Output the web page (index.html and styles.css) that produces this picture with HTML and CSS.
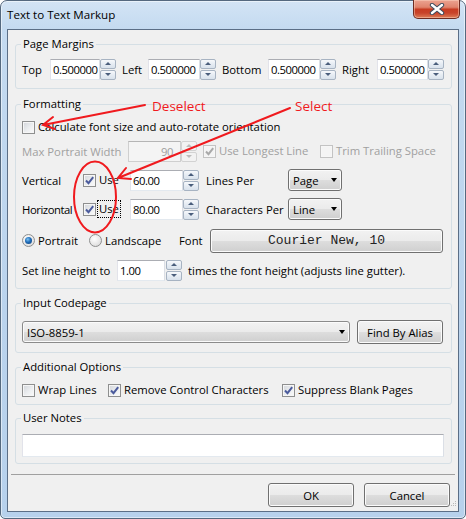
FILE: index.html
```html
<!DOCTYPE html>
<html>
<head>
<meta charset="utf-8">
<title>Text to Text Markup</title>
<link rel="stylesheet" href="styles.css">
</head>
<body>
<div class="window">
  <div class="titlebar">
    <span class="title">Text to Text Markup</span>
    <span class="close">
      <svg width="16" height="12" viewBox="0 0 16 12"><path d="M3 2 L13 10 M13 2 L3 10" stroke="#3d4a5c" stroke-width="4.4" stroke-linecap="round"/><path d="M3 2 L13 10 M13 2 L3 10" stroke="#ffffff" stroke-width="2.4" stroke-linecap="round"/></svg>
    </span>
  </div>
  <div class="client">
    <div class="groups">
      <fieldset class="group g-margins">
        <legend>Page Margins</legend>
        <div class="row">
          <span class="lbl w-top">Top</span>
          <span class="edit w-e1">0.500000</span>
          <span class="spin"><span class="sb up"></span><span class="sb dn"></span></span>
          <span class="lbl pl w-left">Left</span>
          <span class="edit w-e2">0.500000</span>
          <span class="spin"><span class="sb up"></span><span class="sb dn"></span></span>
          <span class="lbl pl w-bottom">Bottom</span>
          <span class="edit w-e2">0.500000</span>
          <span class="spin"><span class="sb up"></span><span class="sb dn"></span></span>
          <span class="lbl pl w-right">Right</span>
          <span class="edit w-e4">0.500000</span>
          <span class="spin"><span class="sb up"></span><span class="sb dn"></span></span>
        </div>
      </fieldset>

      <fieldset class="group g-format">
        <legend>Formatting</legend>
        <div class="row short r-calc">
          <span class="chk"></span>
          <span class="ctext">Calculate font size and auto-rotate orientation</span>
        </div>
        <div class="row r-gap">
          <span class="lbl dis w-maxp">Max Portrait Width</span>
          <span class="edit disabled w-e53 right">90</span>
          <span class="spin dis"><span class="sb up"></span><span class="sb dn"></span></span>
          <span class="citem w-longest">
            <span class="chk dis"><svg width="11" height="11" viewBox="0 0 11 11"><path d="M2 5.5 L4.5 8.2 L9.2 2.2" fill="none" stroke="#a9a9a9" stroke-width="2"/></svg></span>
            <span class="ctext dis">Use Longest Line</span>
          </span>
          <span class="citem">
            <span class="chk dis"></span>
            <span class="ctext dis">Trim Trailing Space</span>
          </span>
        </div>
        <div class="row r-gap">
          <span class="lbl w-axis">Vertical</span>
          <span class="citem w-use">
            <span class="chk"><svg width="11" height="11" viewBox="0 0 11 11"><path d="M2 5.5 L4.5 8.2 L9.2 2.2" fill="none" stroke="#4b5b9c" stroke-width="2"/></svg></span>
            <span class="ctext use">Use</span>
          </span>
          <span class="edit w-e53">60.00</span>
          <span class="spin"><span class="sb up"></span><span class="sb dn"></span></span>
          <span class="lbl pl7 w-per">Lines Per</span>
          <span class="combo w-sel">Page<span class="arrow"></span></span>
        </div>
        <div class="row r-gap">
          <span class="lbl w-axis tight">Horizontal</span>
          <span class="citem w-use">
            <span class="chk"><svg width="11" height="11" viewBox="0 0 11 11"><path d="M2 5.5 L4.5 8.2 L9.2 2.2" fill="none" stroke="#4b5b9c" stroke-width="2"/></svg></span>
            <span class="ctext use focus">Use</span>
          </span>
          <span class="edit w-e53">80.00</span>
          <span class="spin"><span class="sb up"></span><span class="sb dn"></span></span>
          <span class="lbl pl7 w-per">Characters Per</span>
          <span class="combo w-sel">Line<span class="arrow"></span></span>
        </div>
        <div class="row tall r-font">
          <span class="citem w-portrait">
            <span class="rad on"><span class="dot"></span></span>
            <span class="ctext">Portrait</span>
          </span>
          <span class="citem w-landscape">
            <span class="rad"></span>
            <span class="ctext">Landscape</span>
          </span>
          <span class="lbl w-font">Font</span>
          <span class="btn mono w-fontbtn">Courier New, 10</span>
        </div>
        <div class="row r-lh">
          <span class="lbl w-lh">Set line height to</span>
          <span class="edit w-e48">1.00</span>
          <span class="spin ml1"><span class="sb up"></span><span class="sb dn"></span></span>
          <span class="lbl pl6">times the font height (adjusts line gutter).</span>
        </div>
      </fieldset>

      <fieldset class="group g-codepage">
        <legend>Input Codepage</legend>
        <div class="row tall2">
          <span class="combo w-cp">ISO-8859-1<span class="arrow"></span></span>
          <span class="btn w-alias">Find By Alias</span>
        </div>
      </fieldset>

      <fieldset class="group g-options">
        <legend>Additional Options</legend>
        <div class="row short">
          <span class="citem w-wrap">
            <span class="chk"></span>
            <span class="ctext">Wrap Lines</span>
          </span>
          <span class="citem w-remove">
            <span class="chk"><svg width="11" height="11" viewBox="0 0 11 11"><path d="M2 5.5 L4.5 8.2 L9.2 2.2" fill="none" stroke="#4b5b9c" stroke-width="2"/></svg></span>
            <span class="ctext">Remove Control Characters</span>
          </span>
          <span class="citem">
            <span class="chk"><svg width="11" height="11" viewBox="0 0 11 11"><path d="M2 5.5 L4.5 8.2 L9.2 2.2" fill="none" stroke="#4b5b9c" stroke-width="2"/></svg></span>
            <span class="ctext">Suppress Blank Pages</span>
          </span>
        </div>
      </fieldset>

      <fieldset class="group g-notes">
        <legend>User Notes</legend>
        <div class="notes"></div>
      </fieldset>
    </div>

    <div class="separator"></div>

    <div class="buttons">
      <span class="btn w-ok">OK</span>
      <span class="btn w-ok">Cancel</span>
      <svg class="grip" width="7" height="7" viewBox="0 0 7 7"><g fill="#b8b8b8"><rect x="5" y="1" width="1" height="1"/><rect x="3" y="3" width="1" height="1"/><rect x="5" y="3" width="1" height="1"/><rect x="1" y="5" width="1" height="1"/><rect x="3" y="5" width="1" height="1"/><rect x="5" y="5" width="1" height="1"/></g></svg>
    </div>
  </div>

  <svg class="annot" width="466" height="519" viewBox="0 0 466 519">
    <g stroke="#f01a1e" stroke-width="2" fill="none" stroke-linecap="round">
      <path d="M145 105 L43 125 M53 117 L43 125 L55 129"/>
      <path d="M290 108 L118 178 M126 168 L118 178 L131 179"/>
      <ellipse cx="95" cy="197" rx="21" ry="35.5"/>
    </g>
    <text x="152" y="111" class="anno">Deselect</text>
    <text x="295" y="111" class="anno">Select</text>
  </svg>
</div>
</body>
</html>
```

FILE: styles.css
```css
* { box-sizing: border-box; }
html, body { margin: 0; padding: 0; }
body {
  width: 466px;
  height: 519px;
  overflow: hidden;
  background: #ffffff;
  font-family: "Open Sans", "Noto Sans", sans-serif;
  font-size: 11.3px;
  color: #000;
}

.window {
  position: relative;
  width: 466px;
  height: 519px;
  border: 1px solid #55697f;
  border-radius: 7px 7px 5px 5px;
  background: linear-gradient(180deg, #d3e4f5 0px, #c4daf0 28px, #bad3ed 60%, #b7d1ec 100%);
  box-shadow: inset 0 0 0 1px rgba(255,255,255,0.5);
  display: flex;
  flex-direction: column;
  padding: 0 6px 6px 6px;
}

.titlebar {
  height: 28px;
  display: flex;
  align-items: center;
  justify-content: space-between;
  flex-shrink: 0;
}
.title { font-size: 11.6px; line-height: 16px; }
.close {
  align-self: flex-start;
  margin-top: -1px;
  margin-right: -1px;
  width: 47px;
  height: 19px;
  border: 1px solid #6d2c22;
  border-top: none;
  border-radius: 0 0 5px 5px;
  background: linear-gradient(180deg, #eba391 0%, #e0846d 40%, #c73c22 52%, #c8432a 72%, #dd7c57 100%);
  box-shadow: inset 0 0 0 1px rgba(255,220,200,0.45);
  display: flex;
  align-items: center;
  justify-content: center;
}

.client {
  flex: 1;
  border: 1px solid #5b6e86;
  background: #f0f0f0;
  display: flex;
  flex-direction: column;
  padding: 6px 3px 0 3px;
}

.groups {
  display: flex;
  flex-direction: column;
  padding: 0 3px 0 4px;
}

.group {
  margin: 0;
  min-width: 0;
  border: 1px solid #d5dfe5;
  border-radius: 3px;
  padding: 8px 7px 6px 6px;
}
.group legend {
  padding: 0 2px;
  margin-left: -1px;
  line-height: 16px;
  font-size: 11.3px;
}

.g-margins { margin-bottom: 7px; padding-top: 6px; padding-bottom: 8px; }
.g-format { margin-bottom: 6px; padding-top: 7px; padding-bottom: 7px; }
.g-codepage { margin-bottom: 6px; padding-top: 9px; padding-bottom: 8px; }
.g-options { margin-bottom: 5px; padding-top: 7px; padding-bottom: 6px; }
.g-notes { padding-top: 8px; padding-bottom: 6px; }

.row {
  display: flex;
  align-items: center;
  height: 22px;
  white-space: nowrap;
}
.row.short { height: 16px; }
.row.tall { height: 25px; }
.row.tall2 { height: 24px; }
.r-calc { margin-bottom: 5px; }
.r-gap + .r-gap { margin-top: 7px; }
.r-font { margin-top: 8px; }
.r-lh { margin-top: 6px; }

.lbl { flex-shrink: 0; }
.lbl.tight { letter-spacing: -0.45px; }
.pl { padding-left: 6px; }
.pl6 { padding-left: 6px; }
.pl7 { padding-left: 7px; }
.ml1 { margin-left: 1px; }
.dis { color: #a0a0a0; }

.w-top { width: 28px; }
.w-left { width: 32px; }
.w-bottom { width: 52px; }
.w-right { width: 41px; }
.w-e1 { width: 50px; }
.w-e2 { width: 52px; }
.w-e4 { width: 51px; }
.w-e53 { width: 53px; }
.w-e48 { width: 48px; }
.w-maxp { width: 106px; }
.w-axis { width: 61px; }
.w-use { width: 47px; }
.w-per { width: 89px; }
.w-sel { width: 54px; }
.w-longest { width: 117px; margin-left: 6px; }
.w-portrait { width: 67px; }
.w-landscape { width: 90px; }
.w-font { width: 31px; }
.w-fontbtn { width: 233px; height: 25px; }
.w-lh { width: 95px; }
.w-cp { width: 328px; margin-right: 7px; }
.w-alias { width: 86px; }
.w-wrap { width: 86px; }
.w-remove { width: 174px; }
.w-ok { width: 86px; }

/* text box */
.edit {
  flex-shrink: 0;
  height: 21px;
  background: #fff;
  border: 1px solid;
  border-color: #abadb3 #dbdfe6 #e3e9ef #e2e3ea;
  padding: 0 1px 0 2px;
  display: flex;
  align-items: center;
  letter-spacing: -0.45px;
  overflow: hidden;
}
.edit.right { justify-content: flex-end; padding-right: 7px; }
.edit.disabled {
  background: #f4f4f4;
  border-color: #b5b5b5 #cfcfcf #cfcfcf #cfcfcf;
  color: #a0a0a0;
}

/* spinner */
.spin {
  flex-shrink: 0;
  width: 16px;
  height: 21px;
  display: flex;
  flex-direction: column;
  gap: 1px;
}
.sb {
  flex: 1;
  border: 1px solid #a7b3c2;
  border-radius: 2px;
  background: linear-gradient(180deg, #f6f8fb 0%, #e6ecf3 50%, #d9e2ec 100%);
  display: flex;
  align-items: center;
  justify-content: center;
}
.sb::after {
  content: "";
  width: 0;
  height: 0;
  border-left: 3px solid transparent;
  border-right: 3px solid transparent;
}
.sb.up::after { border-bottom: 3px solid #4a5e7c; }
.sb.dn::after { border-top: 3px solid #4a5e7c; }
.spin.dis .sb { border-color: #d2d2d2; background: #f2f2f2; }
.spin.dis .sb.up::after { border-bottom-color: #bcbcbc; }
.spin.dis .sb.dn::after { border-top-color: #bcbcbc; }

/* checkbox / radio */
.citem { display: flex; align-items: center; flex-shrink: 0; }
.chk {
  flex-shrink: 0;
  width: 13px;
  height: 13px;
  border: 1px solid #8e8f8f;
  background: linear-gradient(135deg, #d2d5da 0%, #eceef0 55%, #fbfbfb 100%);
  box-shadow: inset 0 0 0 1px #f6f6f6;
  margin-right: 3px;
  display: flex;
  align-items: center;
  justify-content: center;
}
.chk svg { display: block; }
.chk.dis { border-color: #c3c3c3; background: #f4f4f4; }
.ctext { line-height: 16px; }
.ctext.use { padding: 0 1px; margin-left: -1px; }
.ctext.focus { outline: 1px dotted #000; outline-offset: 0; }

.rad {
  flex-shrink: 0;
  width: 13px;
  height: 13px;
  border-radius: 50%;
  border: 1px solid #8e8f8f;
  background: radial-gradient(circle at 40% 35%, #ffffff 0%, #e6e6e6 60%, #cfcfcf 100%);
  margin-right: 3px;
  display: flex;
  align-items: center;
  justify-content: center;
}
.rad .dot {
  width: 7px;
  height: 7px;
  border-radius: 50%;
  background: radial-gradient(circle at 40% 35%, #7cc4f5 0%, #1f6cb8 45%, #123d72 100%);
}

/* buttons and drop-downs */
.btn {
  flex-shrink: 0;
  height: 24px;
  border: 1px solid #707070;
  border-radius: 3px;
  background: linear-gradient(180deg, #f2f2f2 0%, #ebebeb 48%, #dddddd 52%, #cfcfcf 100%);
  box-shadow: inset 0 0 0 1px #fbfbfb;
  display: flex;
  align-items: center;
  justify-content: center;
}
.btn.mono {
  font-family: "Liberation Mono", "DejaVu Sans Mono", monospace;
  font-size: 13px;
  color: #222;
}
.combo {
  flex-shrink: 0;
  height: 22px;
  border: 1px solid #707070;
  border-radius: 3px;
  background: linear-gradient(180deg, #f2f2f2 0%, #ebebeb 48%, #dddddd 52%, #cfcfcf 100%);
  box-shadow: inset 0 0 0 1px #fbfbfb;
  display: flex;
  align-items: center;
  justify-content: space-between;
  padding: 0 4px 0 4px;
}
.g-codepage .combo { border-color: #8b8b8b; }
.arrow {
  width: 0;
  height: 0;
  border-left: 3.5px solid transparent;
  border-right: 3.5px solid transparent;
  border-top: 4px solid #000;
}

.notes {
  height: 23px;
  background: #fff;
  border: 1px solid;
  border-color: #abadb3 #dbdfe6 #e3e9ef #e2e3ea;
}

.separator {
  margin-top: 10px;
  height: 1px;
  background: #a0a0a0;
}

.buttons {
  margin-top: 8px;
  display: flex;
  justify-content: flex-end;
  gap: 10px;
  padding-right: 5px;
  position: relative;
}
.grip {
  position: absolute;
  right: -2px;
  top: 17px;
}

.annot {
  position: absolute;
  left: -1px;
  top: -1px;
  pointer-events: none;
}
.anno {
  font-family: "Open Sans", "Noto Sans", sans-serif;
  font-size: 13.5px;
  fill: #f01a1e;
}
```
